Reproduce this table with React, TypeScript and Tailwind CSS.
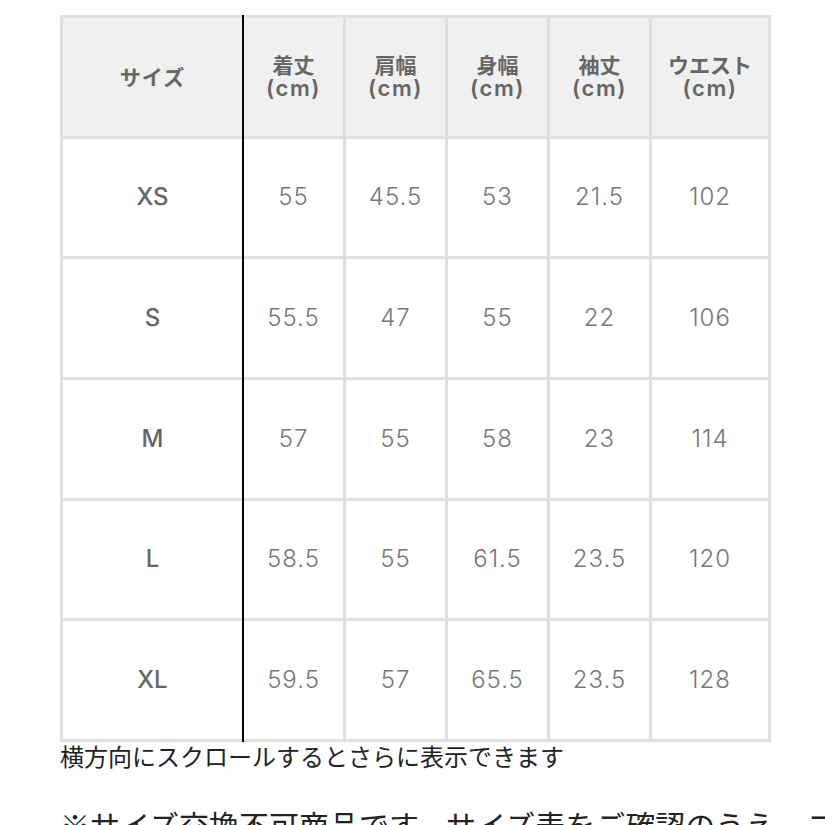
import React from "react";

const headers = [
  ["着丈", "(cm)"],
  ["肩幅", "(cm)"],
  ["身幅", "(cm)"],
  ["袖丈", "(cm)"],
  ["ウエスト", "(cm)"],
];

const rows: [string, string[]][] = [
  ["XS", ["55", "45.5", "53", "21.5", "102"]],
  ["S", ["55.5", "47", "55", "22", "106"]],
  ["M", ["57", "55", "58", "23", "114"]],
  ["L", ["58.5", "55", "61.5", "23.5", "120"]],
  ["XL", ["59.5", "57", "65.5", "23.5", "128"]],
];

const font = { fontFamily: '"Noto Sans CJK JP", "Noto Sans", sans-serif' };
const numFont = { fontFamily: 'Inter, "Noto Sans CJK JP", sans-serif' };

export default function App() {
  return (
    <div className="w-[825px] h-[825px] overflow-hidden bg-white" style={font}>
      <div className="pt-[15px] pl-[60px]">
        <div className="flex w-[711px] h-[727px] bg-[#e0e0e0]">
          {/* first column */}
          <div className="w-[182px] pl-[3px] py-[3px] grid grid-rows-6 gap-[3px]">
            <div className="bg-[#f0f0f0] flex items-center justify-center text-[21px] font-bold text-[#666] tracking-[1px]">
              サイズ
            </div>
            {rows.map(([s]) => (
              <div
                key={s}
                className="bg-white flex items-center justify-center text-[24px] font-medium text-[#666]"
                style={numFont}
              >
                {s}
              </div>
            ))}
          </div>
          <div className="w-[2px] bg-black" />
          {/* data columns */}
          <div className="flex-1 pr-[3px] py-[3px] grid grid-rows-6 grid-cols-[99px_99px_99px_99px_1fr] gap-[3px]">
            {headers.map(([a, b]) => (
              <div
                key={a}
                className="bg-[#f0f0f0] flex flex-col items-center justify-center text-[21px] font-bold text-[#666] leading-[24px] pb-[2px]"
              >
                <span>{a}</span>
                <span style={numFont} className="text-[22px] font-semibold tracking-[1.5px]">{b}</span>
              </div>
            ))}
            {rows.map(([s, vals]) =>
              vals.map((v, i) => (
                <div
                  key={s + i}
                  className="bg-white flex items-center justify-center text-[24px] font-light text-[#777] tracking-[1px]"
                  style={numFont}
                >
                  {v}
                </div>
              ))
            )}
          </div>
        </div>
        <div className="text-[24px] leading-[30px] text-[#222] -mt-[1px]">
          横方向にスクロールするとさらに表示できます
        </div>
        <div className="text-[30px] leading-[40px] text-[#222] mt-[33px] whitespace-nowrap">
          ※サイズ交換不可商品です。サイズ表をご確認のうえ、ご購入ください。
        </div>
      </div>
    </div>
  );
}
